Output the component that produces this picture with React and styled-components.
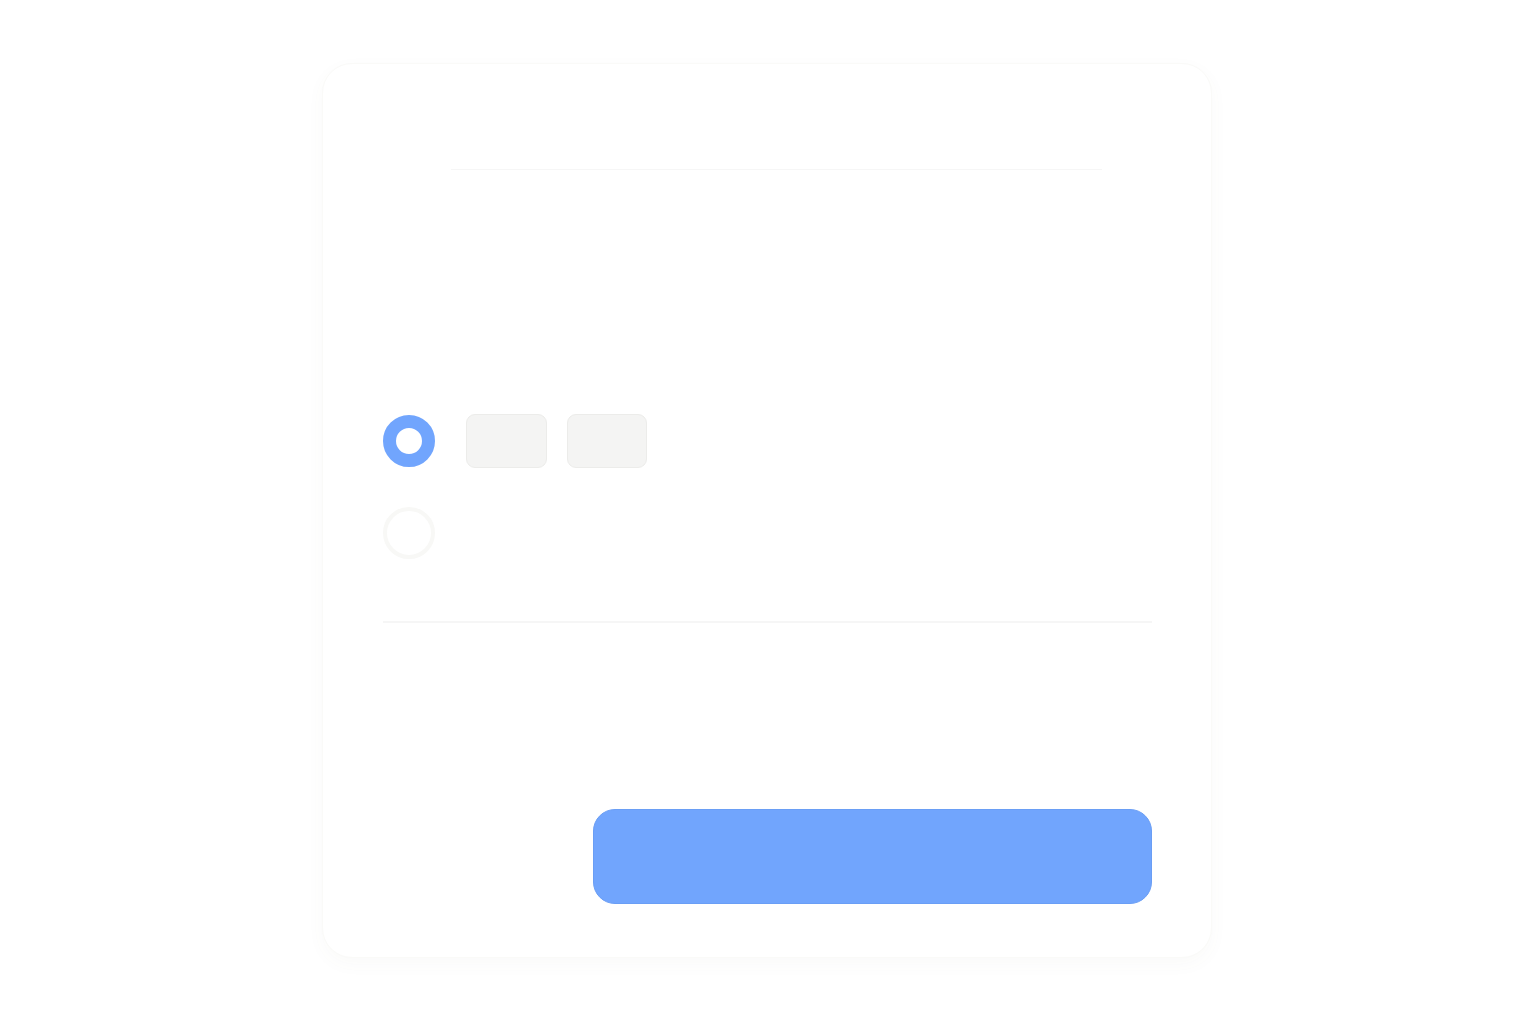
import React from "react";
import styled, { createGlobalStyle } from "styled-components";

const Global = createGlobalStyle`
  html, body { margin: 0; padding: 0; background: #ffffff; font-family: "Inter", "Liberation Sans", sans-serif; }
  #root { min-height: 1024px; }
`;

const Page = styled.div`
  width: 1536px;
  height: 1024px;
  padding: 63px 0 0 322px;
  box-sizing: border-box;
`;

const Card = styled.div`
  width: 890px;
  height: 895px;
  box-sizing: border-box;
  background: #ffffff;
  border-radius: 30px;
  border: 1px solid #fafaf8;
  box-shadow: 0 6px 18px rgba(120, 110, 80, 0.035);
  display: flex;
  flex-direction: column;
  padding: 0 59px 53px 60px;
`;

const Header = styled.div`
  height: 105px;
  margin: 0 50px 0 68px;
  border-bottom: 1px solid #f6f6f6;
  flex-shrink: 0;
`;

const Options = styled.div`
  display: flex;
  flex-direction: column;
  gap: 40px;
  padding-top: 245px;
  padding-bottom: 62px;
  border-bottom: 2px solid #f6f6f6;
`;

const OptionRow = styled.div`
  display: flex;
  align-items: center;
  gap: 31px;
  height: 52px;
`;

const Radio = styled.div`
  width: 52px;
  height: 52px;
  box-sizing: border-box;
  border-radius: 50%;
  border: ${(p) => (p.$checked ? "13px solid #71a5fd" : "4px solid #f8f8f6")};
  background: #ffffff;
  flex-shrink: 0;
`;

const Chips = styled.div`
  display: flex;
  gap: 20px;
`;

const Chip = styled.div`
  width: ${(p) => p.$w}px;
  height: 54px;
  box-sizing: border-box;
  border-radius: 9px;
  background: #f4f4f3;
  border: 1px solid #ececea;
`;

const Footer = styled.div`
  flex: 1;
  display: flex;
  justify-content: flex-end;
  align-items: flex-end;
`;

const PrimaryButton = styled.button`
  width: 559px;
  height: 95px;
  border: 1px solid #6a9ef5;
  border-radius: 22px;
  background: #71a5fd;
  cursor: pointer;
  padding: 0;
`;

export default function App() {
  return (
    <>
      <Global />
      <Page>
        <Card>
          <Header />
          <Options>
            <OptionRow>
              <Radio $checked />
              <Chips>
                <Chip $w={81} />
                <Chip $w={80} />
              </Chips>
            </OptionRow>
            <OptionRow>
              <Radio />
            </OptionRow>
          </Options>
          <Footer>
            <PrimaryButton aria-label="Continue" />
          </Footer>
        </Card>
      </Page>
    </>
  );
}
